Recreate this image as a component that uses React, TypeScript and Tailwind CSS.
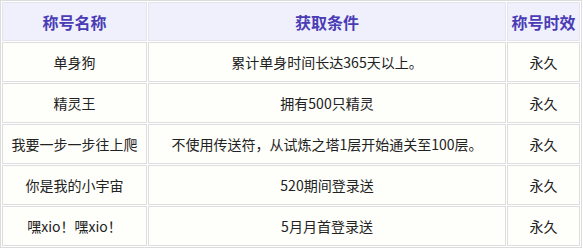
const ROWS = [
  { name: '单身狗', cond: '累计单身时间长达365天以上。', time: '永久' },
  { name: '精灵王', cond: '拥有500只精灵', time: '永久' },
  { name: '我要一步一步往上爬', cond: '不使用传送符，从试炼之塔1层开始通关至100层。', time: '永久' },
  { name: '你是我的小宇宙', cond: '520期间登录送', time: '永久' },
  { name: '嘿xio！嘿xio！', cond: '5月月首登录送', time: '永久' },
]

export default function App() {
  return (
    <div className="w-[583px] h-[249px] bg-white overflow-hidden font-['Noto_Sans_CJK_SC',sans-serif]">
      <table className="w-[582px] border-separate border-spacing-px border border-[#dcdcdc] table-fixed">
        <colgroup>
          <col className="w-[145px]" />
          <col className="w-[358px]" />
          <col />
        </colgroup>
        <thead>
          <tr className="h-[39px]">
            {['称号名称', '获取条件', '称号时效'].map((h) => (
              <th
                key={h}
                className="border border-[#e4e4ec] bg-[#f0f0fd] text-[16px] font-bold text-[#4a3cb4] text-center p-0 leading-none"
              >
                {h}
              </th>
            ))}
          </tr>
        </thead>
        <tbody>
          {ROWS.map((r) => (
            <tr key={r.name} className="h-[40px]">
              <td className="border border-[#dedede] bg-[#fefefa] text-[14px] text-[#222] text-center p-0">
                {r.name}
              </td>
              <td className="border border-[#dedede] bg-[#fefefa] text-[14px] text-[#222] text-center p-0">
                {r.cond}
              </td>
              <td className="border border-[#dedede] bg-[#fefefa] text-[14px] text-[#222] text-center p-0">
                {r.time}
              </td>
            </tr>
          ))}
        </tbody>
      </table>
    </div>
  )
}
